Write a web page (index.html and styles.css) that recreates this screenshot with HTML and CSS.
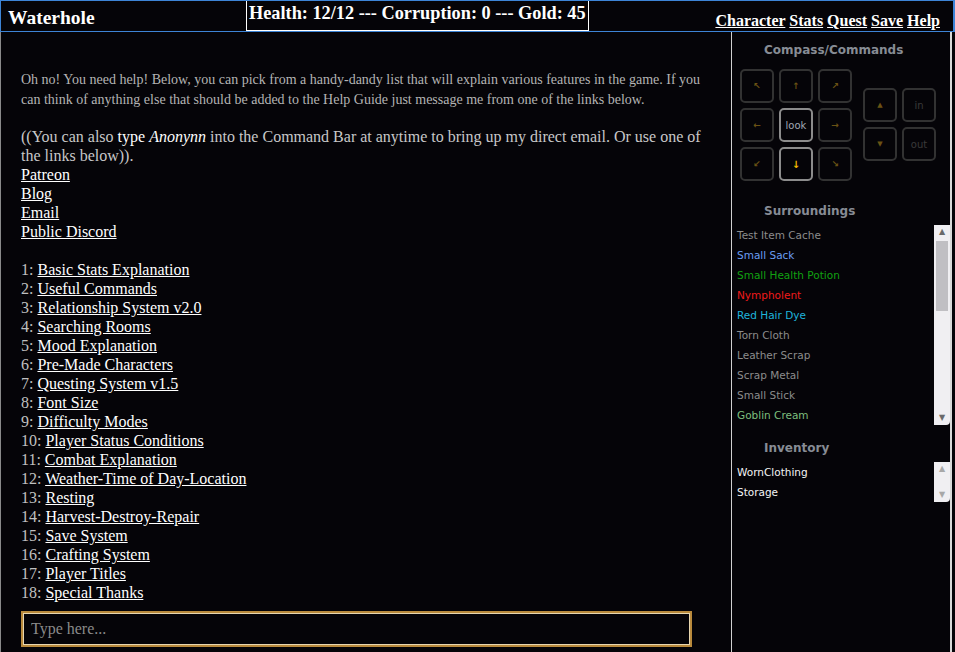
FILE: index.html
```html
<!DOCTYPE html>
<html lang="en">
<head>
    <meta charset="UTF-8">
    <title>Waterhole</title>
    <link rel="stylesheet" href="styles.css">
</head>
<body>
    <div class="header">
        <div class="location">Waterhole</div>
        <div class="stats">Health: 12/12 --- Corruption: 0 --- Gold: 45</div>
        <div class="nav">
            <a href="#">Character</a>
            <a href="#">Stats</a>
            <a href="#">Quest</a>
            <a href="#">Save</a>
            <a href="#">Help</a>
        </div>
    </div>

    <div class="main">
        <div class="story">
            <p class="intro">Oh no! You need help! Below, you can pick from a handy-dandy list that will explain various features in the game. If you can think of anything else that should be added to the Help Guide just message me from one of the links below.</p>

            <p class="note">((You can also <span class="cmd">type <i>Anonynn</i></span> into the Command Bar at anytime to bring up my direct email. Or use one of the links below)).</p>
            <ul class="links">
                <li><a href="#">Patreon</a></li>
                <li><a href="#">Blog</a></li>
                <li><a href="#">Email</a></li>
                <li><a href="#">Public Discord</a></li>
            </ul>

            <ol class="topics">
                <li>1: <a href="#">Basic Stats Explanation</a></li>
                <li>2: <a href="#">Useful Commands</a></li>
                <li>3: <a href="#">Relationship System v2.0</a></li>
                <li>4: <a href="#">Searching Rooms</a></li>
                <li>5: <a href="#">Mood Explanation</a></li>
                <li>6: <a href="#">Pre-Made Characters</a></li>
                <li>7: <a href="#">Questing System v1.5</a></li>
                <li>8: <a href="#">Font Size</a></li>
                <li>9: <a href="#">Difficulty Modes</a></li>
                <li>10: <a href="#">Player Status Conditions</a></li>
                <li>11: <a href="#">Combat Explanation</a></li>
                <li>12: <a href="#">Weather-Time of Day-Location</a></li>
                <li>13: <a href="#">Resting</a></li>
                <li>14: <a href="#">Harvest-Destroy-Repair</a></li>
                <li>15: <a href="#">Save System</a></li>
                <li>16: <a href="#">Crafting System</a></li>
                <li>17: <a href="#">Player Titles</a></li>
                <li>18: <a href="#">Special Thanks</a></li>
            </ol>

            <input class="command" type="text" placeholder="Type here...">
        </div>

        <div class="sidebar">
            <h3>Compass/Commands</h3>
            <div class="compass">
                <div class="grid">
                    <button>&#8598;</button>
                    <button>&#8593;</button>
                    <button>&#8599;</button>
                    <button>&#8592;</button>
                    <button class="lit">look</button>
                    <button>&#8594;</button>
                    <button>&#8601;</button>
                    <button class="lit active">&#8595;</button>
                    <button>&#8600;</button>
                </div>
                <div class="grid extra">
                    <button class="tri">&#9650;</button>
                    <button class="word">in</button>
                    <button class="tri">&#9660;</button>
                    <button class="word">out</button>
                </div>
            </div>

            <h3>Surroundings</h3>
            <div class="listbox tall">
                <ul>
                    <li class="plain">Test Item Cache</li>
                    <li class="blue">Small Sack</li>
                    <li class="green">Small Health Potion</li>
                    <li class="red">Nympholent</li>
                    <li class="cyan">Red Hair Dye</li>
                    <li class="plain">Torn Cloth</li>
                    <li class="plain">Leather Scrap</li>
                    <li class="plain">Scrap Metal</li>
                    <li class="plain">Small Stick</li>
                    <li class="pale">Goblin Cream</li>
                </ul>
                <div class="scroll">
                    <span class="up">&#9650;</span>
                    <span class="thumb"></span>
                    <span class="down">&#9660;</span>
                </div>
            </div>

            <h3>Inventory</h3>
            <div class="listbox short">
                <ul>
                    <li class="white">WornClothing</li>
                    <li class="white">Storage</li>
                </ul>
                <div class="scroll">
                    <span class="up faded">&#9650;</span>
                    <span class="down faded">&#9660;</span>
                </div>
            </div>
        </div>
    </div>
</body>
</html>
```

FILE: styles.css
```css
body {
    margin: 0;
    background-color: #050408;
    color: #ffffff;
    font-family: "Liberation Serif", serif;
}
a {
    color: #ffffff;
}

/* top bar */
.header {
    display: flex;
    align-items: stretch;
    height: 30px;
    border: 1px solid #3d84d6;
    border-right-width: 2px;
}
.location {
    width: 238px;
    padding: 6px 0 0 7px;
    font-size: 19.5px;
    font-weight: bold;
}
.stats {
    padding: 2px 2px 0 2px;
    border: 1px solid #ffffff;
    border-top: none;
    font-size: 18.3px;
    font-weight: bold;
    white-space: nowrap;
}
.nav {
    flex: 1;
    text-align: right;
    padding: 11px 13px 0 0;
    font-size: 16px;
    font-weight: bold;
}

/* main area */
.main {
    display: flex;
    height: 620px;
}
.story {
    width: 690px;
    padding: 38px 20px 0 20px;
    border-left: 1px solid #8a8a8a;
    border-right: 1px solid #d0d0d0;
    color: #c0c0c0;
}
.intro {
    margin: 0 0 17px 0;
    font-size: 14px;
    line-height: 20px;
    color: #b4b4b4;
}
.note {
    margin: 0;
    font-size: 16px;
    line-height: 19px;
    color: #c8c8c8;
}
.cmd {
    color: #ffffff;
}
.links {
    list-style: none;
    margin: 0 0 19px 0;
    padding: 0;
    font-size: 16px;
    line-height: 19px;
}
.topics {
    list-style: none;
    margin: 0;
    padding: 0;
    font-size: 16px;
    line-height: 19px;
}
.command {
    display: block;
    box-sizing: border-box;
    width: 671px;
    height: 36px;
    margin-top: 9px;
    padding: 0 8px;
    background-color: #050408;
    border: 2px solid #b98a3c;
    box-shadow: inset 0 0 0 1px #e8d7b0;
    color: #ffffff;
    font-family: "Liberation Serif", serif;
    font-size: 16px;
}
.command::placeholder {
    color: #8a8a8a;
}

/* right panel */
.sidebar {
    width: 218px;
    border-right: 2px solid #d8d8d8;
    font-family: "DejaVu Sans", sans-serif;
}
.sidebar h3 {
    margin: 11px 0 0 0;
    padding-left: 32px;
    font-size: 12px;
    font-weight: bold;
    color: #878c95;
}
.compass {
    display: flex;
    gap: 11px;
    padding-left: 8px;
    margin: 12px 0 23px 0;
}
.grid {
    display: grid;
    grid-template-columns: repeat(3, 34px);
    gap: 5px;
}
.grid.extra {
    grid-template-columns: repeat(2, 34px);
    margin-top: 19px;
    align-content: start;
}
.grid button {
    width: 34px;
    height: 34px;
    padding: 0;
    border: 2px solid #323232;
    border-radius: 5px;
    background-color: #050408;
    color: #6a5214;
    font-size: 9px;
    font-weight: bold;
    font-family: "DejaVu Sans", sans-serif;
}
.grid button.lit {
    border-color: #8c8c8c;
    color: #a0a8b4;
    font-size: 10px;
    font-weight: normal;
}
.grid button.active {
    color: #f5b800;
    font-size: 10px;
    font-weight: bold;
}
.grid button.tri {
    font-size: 7px;
}
.grid button.word {
    color: #3a3a3a;
    font-size: 10px;
    font-weight: normal;
}

.listbox {
    display: flex;
    margin-left: 3px;
    margin-top: 7px;
}
.listbox ul {
    flex: 1;
    list-style: none;
    margin: 0;
    padding: 0 0 0 2px;
    font-size: 10.5px;
    line-height: 20px;
}
.listbox.tall {
    height: 200px;
    margin-bottom: 16px;
}
.listbox.short {
    height: 40px;
}
.scroll {
    display: flex;
    flex-direction: column;
    width: 16px;
    background-color: #f0eff2;
    border-radius: 0 0 4px 0;
    font-size: 8px;
    color: #6a6a6a;
    text-align: center;
}
.scroll .up, .scroll .down {
    height: 14px;
    line-height: 14px;
}
.scroll .down {
    margin-top: auto;
}
.scroll .faded {
    color: #a8a8a8;
}
.scroll .thumb {
    height: 70px;
    margin: 2px 2px 0 2px;
    background-color: #c0bfc3;
}
.plain { color: #8c8c8c; }
.blue { color: #6a9df2; }
.green { color: #11a111; }
.red { color: #f01a1a; }
.cyan { color: #1fb4dc; }
.pale { color: #7dbf7d; }
.white { color: #f4f4f4; }
```
